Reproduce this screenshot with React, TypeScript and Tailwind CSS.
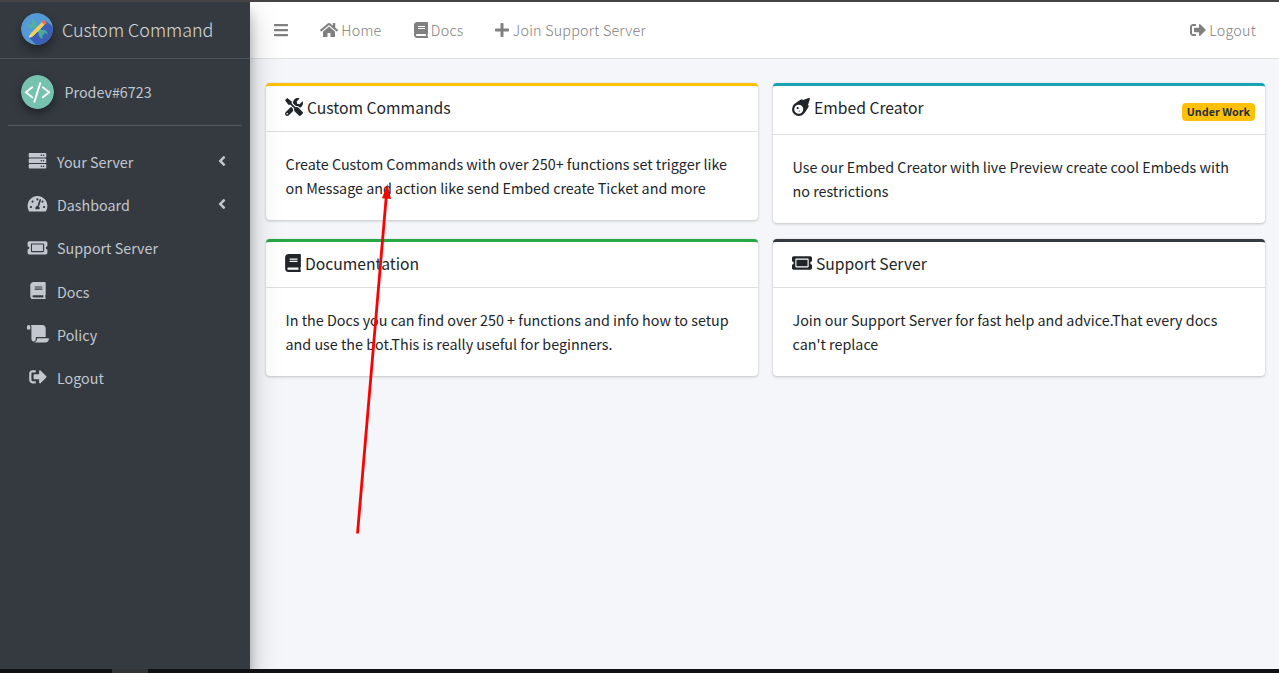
import type { ReactNode } from 'react';
import type { IconType } from 'react-icons';
import {
  FaAngleLeft,
  FaBars,
  FaBook,
  FaHome,
  FaMeteor,
  FaPlus,
  FaScroll,
  FaServer,
  FaSignOutAlt,
  FaTachometerAlt,
  FaTicketAlt,
  FaTools,
} from 'react-icons/fa';

function BrandLogo() {
  return (
    <svg viewBox="0 0 32 32" className="size-8 rounded-full shadow-[0_6px_10px_rgba(0,0,0,0.35)]">
      <defs>
        <clipPath id="disc">
          <circle cx="16" cy="16" r="16" />
        </clipPath>
      </defs>
      <g clipPath="url(#disc)">
        <rect width="32" height="32" fill="#5599d6" />
        <path d="M25 8 34 16V34H17L8 24.500Z" fill="#3a5fb5" />
        <path d="m11 11 11.500 10.500" stroke="#4fb0a0" strokeWidth="4" />
        <path
          d="M10.500 6.200c3 0 5 2.600 4.200 5.600l-3.500 3.200c-3 .4-5.200-2-4.900-4.900l2.900 2.200 2.600-2.300z"
          fill="#56b0a2"
        />
        <path
          d="M22 25.500c-3 0-5-2.600-4.200-5.600l3.500-3.200c3-.4 5.600 2 5.300 4.900l-3-2.200-2.600 2.300z"
          fill="#4aaa9c"
        />
        <path d="M21 9.500 23.200 11.700 11.800 23.200 8.600 24.200 9.500 21Z" fill="#f3cf63" stroke="#f3cf63" strokeWidth="0.800" />
        <path d="m21.200 9 1.800-1.600 2.500 2.500-1.700 1.700Z" fill="#ee7350" stroke="#ee7350" />
        <path d="m9 21.700 2.200 2-3.200 1.100Z" fill="#f5dfb5" />
      </g>
    </svg>
  );
}

function Avatar() {
  return (
    <svg viewBox="0 0 34 34" className="h-[34px] w-[33px] rounded-full shadow-[0_4px_8px_rgba(0,0,0,0.4)]" preserveAspectRatio="none">
      <circle cx="17" cy="17" r="17" fill="#76c2af" />
      <path
        d="m11.500 12-6.500 5 6.500 5M22.500 12l6.500 5-6.500 5M19.800 7.800 13.800 26.500"
        transform="translate(0 .3)"
        fill="none"
        stroke="#fff"
        strokeWidth="2"
        strokeLinecap="round"
        strokeLinejoin="round"
      />
    </svg>
  );
}

const menu: { label: string; icon: IconType; width: string; open?: boolean }[] = [
  { label: 'Your Server', icon: FaServer, width: 'w-[19px]', open: true },
  { label: 'Dashboard', icon: FaTachometerAlt, width: 'w-[21px]', open: true },
  { label: 'Support Server', icon: FaTicketAlt, width: 'w-[21px]' },
  { label: 'Docs', icon: FaBook, width: 'w-4' },
  { label: 'Policy', icon: FaScroll, width: 'w-[22px]' },
  { label: 'Logout', icon: FaSignOutAlt, width: 'w-[18px]' },
];

function Sidebar() {
  return (
    <aside className="z-10 flex w-[250px] shrink-0 flex-col bg-[#343a40] text-[#c2c7d0] shadow-[0_14px_28px_rgba(0,0,0,0.25),0_10px_10px_rgba(0,0,0,0.22)]">
      <div className="flex h-[57px] items-center border-b border-[#4b545c] pb-[3px] pl-[21.4px]">
        <BrandLogo />
        <span className="ml-[8.600px] pt-px text-[17.9px] font-light leading-[30px] text-white/80">Custom Command</span>
      </div>
      <div className="mx-2 flex h-[67px] items-center border-b border-[#4f5962] pl-[13px]">
        <Avatar />
        <span className="ml-[10.500px] text-[14.3px] leading-6">Prodev#6723</span>
      </div>
      <nav className="mt-4 flex flex-col gap-[3.2px] px-2">
        {menu.map(({ label, icon: Icon, width, open }) => (
          <a key={label} className="flex h-10 items-center pl-[15.6px] pr-3">
            <span className="mb-[2px] flex w-7 justify-center">
              <Icon className={`h-[17.6px] shrink-0 ${width}`} />
            </span>
            <span className="ml-[5.400px] text-[14.3px] leading-6">{label}</span>
            {open && <FaAngleLeft className="mb-[2px] ml-auto size-4" />}
          </a>
        ))}
      </nav>
    </aside>
  );
}

function NavLink({ icon: Icon, width, children }: { icon: IconType; width: string; children: ReactNode }) {
  return (
    <a className="flex items-center">
      <Icon className={`mb-px h-4 ${width}`} />
      <span className="ml-[3.300px] text-[14.3px] font-light leading-6 tracking-[0.24px]">{children}</span>
    </a>
  );
}

function Card({
  accent,
  icon: Icon,
  iconWidth,
  title,
  badge,
  children,
}: {
  accent: string;
  icon: IconType;
  iconWidth: string;
  title: string;
  badge?: string;
  children: ReactNode;
}) {
  return (
    <section
      className={`rounded-[4px] border-t-[3px] bg-white shadow-[0_0_1px_rgba(0,0,0,0.125),0_1px_3px_rgba(0,0,0,0.2)] ${accent}`}
    >
      <header
        className={`flex items-start justify-between border-b border-black/[0.125] pl-[19.2px] pr-[10px] pt-2 ${badge ? 'h-[49px]' : 'h-[46px]'}`}
      >
        <h3 className="flex items-center">
          <Icon className={`mb-px h-[18px] ${iconWidth}`} />
          <span className="ml-[3.800px] pt-px text-[15.7px] leading-[26px]">{title}</span>
        </h3>
        {badge && (
          <span className="mt-[9px] rounded-[4px] bg-[#ffc107] px-[5px] pb-[2px] text-[10.8px] font-bold leading-4 text-[#1f2d3d]">
            {badge}
          </span>
        )}
      </header>
      <p className="px-[19.5px] pb-5 pt-5 text-[14.33px] leading-6">{children}</p>
    </section>
  );
}

export default function App() {
  return (
    <div className="relative flex h-[673px] w-[1279px] flex-col overflow-hidden bg-[#f4f6f9] font-['Noto_Sans_CJK_SC',sans-serif] text-[#212529]">
      <div className="z-20 h-[2px] shrink-0 bg-[#454345]" />
      <div className="flex min-h-0 flex-1">
        <Sidebar />
        <div className="flex flex-1 flex-col">
          <header className="flex h-[57px] items-center border-b border-[#dee2e6] bg-white pl-6 pr-[23px] text-[#808080]">
            <FaBars className="h-4 w-[14px]" />
            <div className="ml-8 flex gap-8">
              <NavLink icon={FaHome} width="w-[18px]">Home</NavLink>
              <NavLink icon={FaBook} width="w-[14px]">Docs</NavLink>
              <NavLink icon={FaPlus} width="w-[14px]">Join Support Server</NavLink>
            </div>
            <div className="ml-auto">
              <NavLink icon={FaSignOutAlt} width="w-4">Logout</NavLink>
            </div>
          </header>
          <main className="grid grid-cols-2 items-start gap-x-[15px] gap-y-4 pl-4 pr-[14px] pt-6">
            <Card accent="border-[#ffc107]" icon={FaTools} iconWidth="w-[18px]" title="Custom Commands">
              Create Custom Commands with over 250+ functions set trigger like
              <br />
              on Message and action like send Embed create Ticket and more
            </Card>
            <Card accent="border-[#17a2b8]" icon={FaMeteor} iconWidth="w-[18px]" title="Embed Creator" badge="Under Work">
              Use our Embed Creator with live Preview create cool Embeds with
              <br />
              no restrictions
            </Card>
            <Card accent="border-[#28a745]" icon={FaBook} iconWidth="w-4" title="Documentation">
              In the Docs you can find over 250 + functions and info how to setup
              <br />
              and use the bot.This is really useful for beginners.
            </Card>
            <Card accent="border-[#343a40]" icon={FaTicketAlt} iconWidth="w-5" title="Support Server">
              Join our Support Server for fast help and advice.That every docs
              <br />
              can't replace
            </Card>
          </main>
        </div>
      </div>
      <footer className="z-20 h-1 shrink-0 bg-[#101112] pl-28">
        <div className="h-full w-9 bg-[#333435]" />
      </footer>
      <svg className="absolute left-[350px] top-[180px] z-30 h-[360px] w-[50px]" viewBox="350 180 50 360">
        <path d="M357.500 533.500 386.300 196" stroke="#f00" strokeWidth="2.800" />
        <path d="M387.400 184 391 199 382 198.200Z" fill="#f00" />
      </svg>
    </div>
  );
}
